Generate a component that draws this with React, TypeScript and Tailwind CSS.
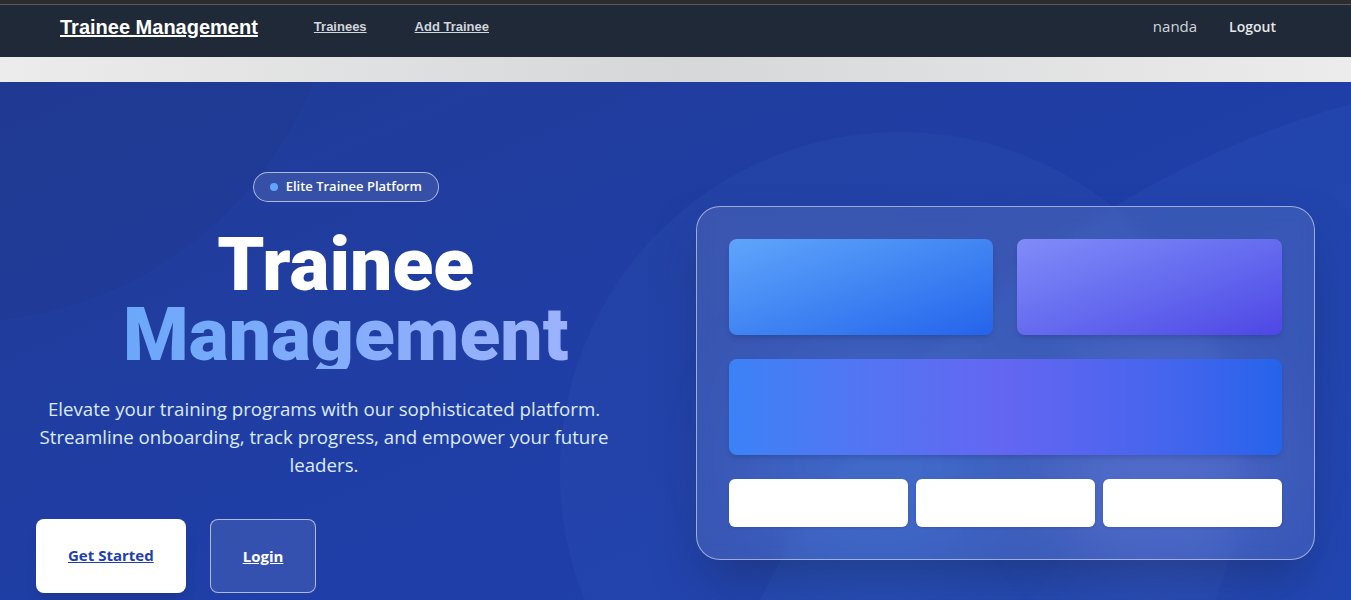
export default function App() {
  return (
    <div className="min-h-screen bg-[#e6e6e7] font-['Open_Sans',sans-serif]">
      {/* window strip */}
      <div className="h-[5px] bg-[#2c2c2c] border-b border-[#5b5b5b]" />

      {/* Navbar */}
      <nav className="h-[52px] bg-[#1f2937] flex items-center pb-2 pl-[60px] pr-[75px]">
        <a href="#" className="text-white text-[20px] font-bold underline font-['Liberation_Sans',sans-serif]">
          Trainee Management
        </a>
        <div className="flex items-center gap-12 ml-14 font-['Liberation_Sans',sans-serif]">
          <a href="#" className="text-[13px] font-bold text-gray-300 underline">Trainees</a>
          <a href="#" className="text-[13px] font-bold text-gray-300 underline">Add Trainee</a>
        </div>
        <div className="ml-auto flex items-center gap-8 pb-px">
          <span className="text-[15px] text-gray-300">nanda</span>
          <button className="text-[14px] font-semibold text-gray-200">Logout</button>
        </div>
      </nav>

      {/* shadow band */}
      <div className="h-[25px] bg-gradient-to-r from-[#ececec] via-[#d6d7d9] to-[#ececec]" />

      {/* Hero */}
      <section className="relative overflow-hidden bg-gradient-to-br from-[#213c97] via-[#1f3ea6] to-[#1f40ad] pt-[90px] pb-16">
        {/* decorative shapes */}
        <div className="absolute left-[670px] top-[-12px] w-[1860px] h-[1860px] rounded-full bg-blue-400/[0.06] pointer-events-none" />
        <div className="absolute left-[560px] top-[50px] w-[680px] h-[680px] rounded-full bg-blue-300/[0.04] pointer-events-none" />
        <div className="absolute left-[-420px] top-[-520px] w-[760px] h-[760px] rounded-full bg-blue-950/[0.08] pointer-events-none" />

        <div className="relative grid grid-cols-2 gap-10 px-9 items-center">
          {/* Left */}
          <div className="flex flex-col">
            <div className="self-center flex items-center gap-2 h-[30px] px-4 rounded-full border border-white/60 bg-white/10">
              <span className="w-2 h-2 rounded-full bg-[#60a5fa]" />
              <span className="text-[13px] font-semibold text-white">Elite Trainee Platform</span>
            </div>

            <h1 className="mt-[27px] text-center font-['Roboto',sans-serif] font-black text-[75px] leading-[70px]">
              <span className="block text-white">Trainee</span>
              <span className="block bg-gradient-to-r from-[#60a5fa] to-[#a5b4fc] bg-clip-text text-transparent">
                Management
              </span>
            </h1>

            <p className="mt-[26px] max-w-[576px] text-center text-[18.7px] leading-7 text-[#dbeafe]">
              Elevate your training programs with our sophisticated platform. Streamline onboarding, track progress, and empower your future leaders.
            </p>

            <div className="mt-[40px] flex gap-6">
              <a href="#" className="px-8 py-6 rounded-lg bg-white text-[15px] leading-6 font-bold text-[#1e40af] underline shadow-lg">
                Get Started
              </a>
              <a href="#" className="px-8 py-6 rounded-lg border border-white/60 bg-white/10 text-[15px] leading-6 font-bold text-white underline">
                Login
              </a>
            </div>
          </div>

          {/* Right */}
          <div className="relative">
            <div className="absolute left-[50px] top-[140px] w-[260px] h-[220px] rounded-full bg-[#3b82f6]/25 blur-2xl" />
            <div className="absolute left-[350px] top-[140px] w-[220px] h-[220px] rounded-full bg-[#818cf8]/25 blur-2xl" />

            <div className="relative rounded-3xl border border-white/50 bg-white/10 backdrop-blur-sm shadow-2xl shadow-[#172554]/50 p-8">
              <div className="grid grid-cols-2 gap-6">
                <div className="h-24 rounded-lg bg-gradient-to-br from-[#60a5fa] to-[#2563eb] shadow-md" />
                <div className="h-24 rounded-lg bg-gradient-to-br from-[#818cf8] to-[#4f46e5] shadow-md" />
              </div>
              <div className="mt-6 h-24 rounded-lg bg-gradient-to-r from-[#3b82f6] via-[#6366f1] to-[#2563eb] shadow-md" />
              <div className="mt-6 grid grid-cols-3 gap-2">
                <div className="h-12 rounded-md bg-white border border-white/70 shadow" />
                <div className="h-12 rounded-md bg-white border border-white/70 shadow" />
                <div className="h-12 rounded-md bg-white border border-white/70 shadow" />
              </div>
            </div>
          </div>
        </div>
      </section>
    </div>
  );
}
